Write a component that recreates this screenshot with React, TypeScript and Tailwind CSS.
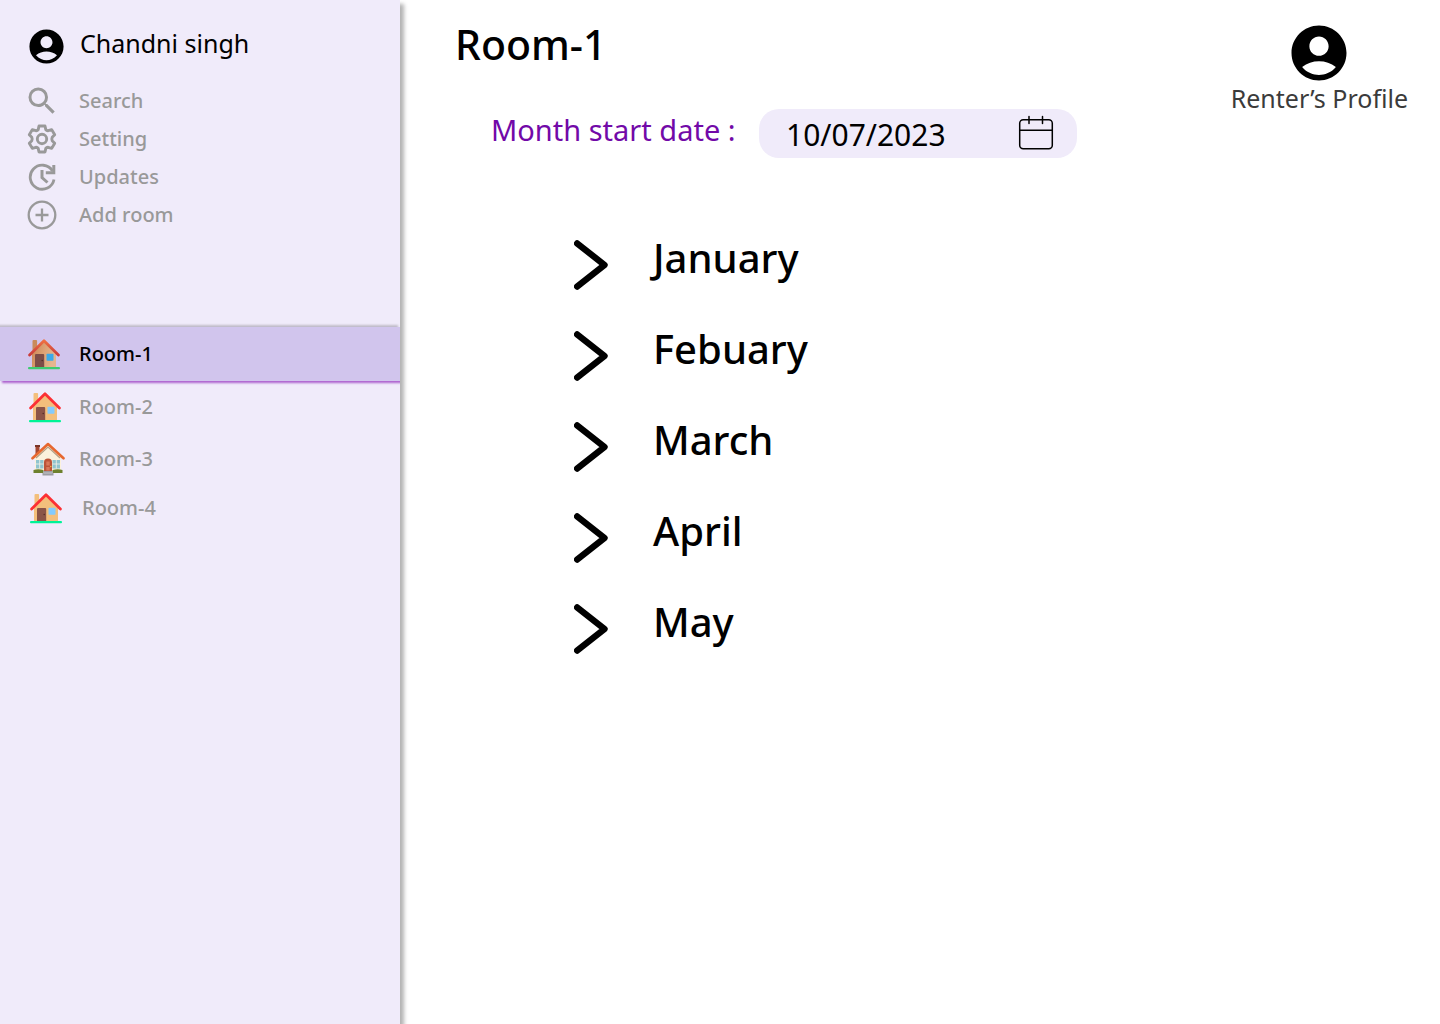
import React from "react";
import { MdAccountCircle, MdSearch } from "react-icons/md";

function GearIcon() {
  return (
    <svg viewBox="0 0 30 30" className="size-[30px]" fill="none" stroke="currentColor" strokeWidth="2.9" strokeLinejoin="round">
      <path d="M12 2h6l.8 3.6Q19.600 6.800 21.100 6.700L24.700 5.600 27.700 10.800 25.200 13.300Q24.400 15 25.200 16.700L27.700 19.200 24.700 24.400 21.100 23.300Q19.600 23.200 18.800 24.400L18 28H12L11.200 24.400Q10.400 23.200 8.900 23.300L5.300 24.400 2.300 19.200 4.800 16.700Q5.600 15 4.800 13.300L2.300 10.800 5.300 5.600 8.900 6.700Q10.400 6.800 11.200 5.600Z" />
      <circle cx="15" cy="15" r="4.700" />
    </svg>
  );
}

function UpdateIcon() {
  return (
    <svg viewBox="0 0 30 30" className="size-[30px]" fill="none" stroke="currentColor" strokeWidth="2.800">
      <path d="M27 17.500A12 12 0 1 1 25.500 9" />
      <path d="M26.800 3v7.800h-8" strokeWidth="3" />
      <path d="M15 8v7.500l5.500 5" strokeWidth="3" />
    </svg>
  );
}

function PlusCircleIcon() {
  return (
    <svg viewBox="0 0 30 30" className="size-[30px]" fill="none" stroke="currentColor" strokeWidth="2.300">
      <circle cx="15" cy="15" r="13.300" />
      <path d="M15 8.500v13M8.500 15h13" />
    </svg>
  );
}

function CalendarIcon() {
  return (
    <svg viewBox="0 0 36 36" className="size-9" fill="none" stroke="black" strokeWidth="1.500" strokeLinecap="round">
      <rect x="1.700" y="4.700" width="32.600" height="29" rx="3.500" />
      <path d="M2 15.200h32M11 1.500v7M24.500 1.500v7" />
    </svg>
  );
}

function House({ shaded = false }: { shaded?: boolean }) {
  return (
    <svg viewBox="0 0 32 32" className="size-8">
      <defs>
        <linearGradient id="wall" x1="0" y1="0" x2="1" y2="0.3">
          <stop offset="0" stopColor="#c98452" />
          <stop offset="0.6" stopColor="#dea477" />
          <stop offset="1" stopColor="#e5b68e" />
        </linearGradient>
        <linearGradient id="roof" x1="0" y1="0" x2="0" y2="1">
          <stop offset="0" stopColor="#ee7043" />
          <stop offset="1" stopColor="#c93b3b" />
        </linearGradient>
      </defs>
      <path d="M4.500 3Q4.500 2 5.500 2h2.600q1 0 1 1v9H4.500z" fill={shaded ? "#c98b5b" : "#f3bf7c"} />
      <path d="M16 3 4 14v15h24V14z" fill={shaded ? "url(#wall)" : "#f3bf7c"} />
      <path d="M1.600 17 16 2.800 30.400 17" fill="none" stroke={shaded ? "url(#roof)" : "#fc3034"} strokeWidth="2.800" strokeLinecap="round" strokeLinejoin="round" />
      <path d="M7 17q0-1 1-1h7.200q1 0 1 1v12H7z" fill={shaded ? "#7d4c47" : "#8b5447"} />
      <circle cx="14.200" cy="22.500" r=".7" fill="#4a2724" />
      <rect x="18.500" y="15.800" width="7" height="7" rx=".7" fill={shaded ? "#3ba9e8" : "#83cbff"} />
      <rect x="0" y="29" width="32" height="2.200" rx="1" fill={shaded ? "#3dcb70" : "#00f397"} />
    </svg>
  );
}

function Cottage() {
  return (
    <svg viewBox="0 0 34 34" className="size-[34px]">
      <path d="M4.500 4h4v8h-4z" fill="#a44732" />
      <path d="M4 3h5v2H4z" fill="#7b3426" />
      <path d="M17 3 4 15v14h26V15z" fill="#fbf1dd" />
      <path d="m5 16 12-11 12 11" fill="none" stroke="#b39c80" strokeWidth="1.200" />
      <path d="M1.500 16.300 17 2l15.500 14.300" fill="none" stroke="#e7672f" strokeWidth="2.600" strokeLinecap="round" strokeLinejoin="round" />
      <path d="M5 18h7.500v8.500H5zM21.500 18H29v8.500h-7.500z" fill="#8fc4cf" />
      <path d="M8.700 18v8.500M5 22h7.500M25.300 18v8.500M21.500 22H29" stroke="#f7f3e6" strokeWidth=".8" />
      <path d="M13 31V20q0-3.500 4-3.500t4 3.500v11z" fill="#bd5338" />
      <path d="M15.300 19.500h3.400v4h-3.400zM15.300 25h3.400v3.500h-3.400z" fill="#d9785a" />
      <circle cx="19.800" cy="24.500" r=".8" fill="#f3bd42" />
      <path d="M2.500 28q4.500-1.500 10 0v3h-10zM21.500 28q5.500-1.500 10 0v3h-10z" fill="#6e812e" />
      <path d="M12.500 29h9v2h1v2.500h-11V31h1z" fill="#9b9ca2" />
      <path d="M12.500 31h9" stroke="#c3c4c8" />
    </svg>
  );
}

function Chevron() {
  return (
    <svg viewBox="0 0 34 50" className="h-[50px] w-[34px]" fill="none" stroke="black" strokeWidth="6.400" strokeLinecap="round" strokeLinejoin="round">
      <path d="M3.200 3.400 30.500 25 3.200 46.600" />
    </svg>
  );
}

const menu = [
  { label: "Search", icon: <MdSearch className="size-9" /> },
  { label: "Setting", icon: <GearIcon /> },
  { label: "Updates", icon: <UpdateIcon /> },
  { label: "Add room", icon: <PlusCircleIcon /> },
];

const months = ["January", "Febuary", "March", "April", "May"];

export default function App() {
  return (
    <div className="flex min-h-screen bg-white font-['Noto_Sans','Open_Sans',sans-serif] text-black">
      <aside className="w-[400px] shrink-0 bg-[#f0ebfa] shadow-[4px_4px_4px_rgba(0,0,0,0.3)]">
        <button className="mt-7 flex h-9 items-center gap-[13px] pl-[26px] text-[25px]">
          <MdAccountCircle className="size-[41px]" />
          <span className="pb-1">Chandni singh</span>
        </button>
        <nav aria-label="Main" className="mt-[18px] text-[20px] font-medium text-[#999999]">
          {menu.map((item) => (
            <button key={item.label} className="flex h-[38px] w-full items-center gap-4 pl-6 text-left">
              <span className="flex w-9 justify-center">{item.icon}</span>
              <span className="pl-[3px]">{item.label}</span>
            </button>
          ))}
        </nav>
        <nav aria-label="Rooms" className="mt-[85px] overflow-hidden pt-2 text-[20px] font-medium text-[#999999]">
          <a
            href="#room-1"
            aria-current="page"
            className="flex h-[54px] items-center gap-[19px] bg-[#d1c5ed] pl-7 text-black shadow-[2px_2px_2px_rgba(145,40,190,0.7),-2px_-2px_2px_rgba(0,0,0,0.2)]"
          >
            <House shaded />
            Room-1
          </a>
          <a href="#room-2" className="flex h-[52px] items-center gap-[18px] pl-[29px]">
            <House />
            Room-2
          </a>
          <a href="#room-3" className="flex h-[52px] items-center gap-[14px] pl-[31px]">
            <Cottage />
            Room-3
          </a>
          <a href="#room-4" className="flex h-[46px] items-center gap-5 pl-[30px]">
            <House />
            Room-4
          </a>
        </nav>
      </aside>

      <main className="min-w-0 flex-1">
        <header className="flex items-start justify-between pr-8 pl-[55px]">
          <div>
            <h1 className="mt-3.5 text-[41px] leading-[60px] font-medium">Room-1</h1>
            <div className="mt-[35px] flex items-center pl-9">
              <label htmlFor="start-date" className="w-[268px] pb-2 text-[29px] leading-10 whitespace-nowrap text-[#7209a8]">
                Month start date :
              </label>
              <div className="flex h-[49px] w-[318px] items-center rounded-[20px] bg-[#f0ebfa] pr-[23px] pl-[27px]">
                <input
                  id="start-date"
                  type="text"
                  defaultValue="10/07/2023"
                  className="min-w-0 flex-1 bg-transparent pt-0.5 text-[30px] leading-10 outline-none"
                />
                <button aria-label="Open calendar" className="pb-0.5">
                  <CalendarIcon />
                </button>
              </div>
            </div>
          </div>
          <button className="mt-5 flex flex-col items-center text-[25px] leading-6 text-[#3b3b3b]">
            <MdAccountCircle className="size-[66px] text-black" />
            <span className="whitespace-nowrap">Renter’s Profile</span>
          </button>
        </header>

        <ul className="mt-[65px] pl-[174px]">
          {months.map((month) => (
            <li key={month} className="h-[91px]">
              <button className="flex items-center gap-[45px] pt-2.5 text-[40px] leading-[50px] font-medium">
                <Chevron />
                <span className="pb-3.5">{month}</span>
              </button>
            </li>
          ))}
        </ul>
      </main>
    </div>
  );
}
